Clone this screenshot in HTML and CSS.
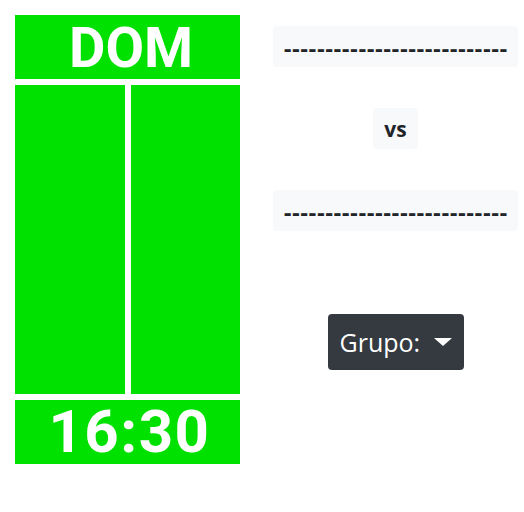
FILE: index.html
```html
<!DOCTYPE html>
<html>
<head>
<meta charset="utf-8">
<link rel="stylesheet" href="styles.css">
</head>
<body>
<div class="page">
  <div class="board">
    <div class="board-head">DOM</div>
    <div class="board-cols">
      <div class="board-col"></div>
      <div class="board-col"></div>
    </div>
    <div class="board-foot">16:30</div>
  </div>
  <div class="match">
    <div class="team">---------------------------</div>
    <div class="vs">vs</div>
    <div class="team">---------------------------</div>
    <button class="group-btn"><span class="group-label">Grupo:</span><span class="caret"></span></button>
  </div>
</div>
</body>
</html>
```
FILE: styles.css
```css
html, body {
  margin: 0;
  padding: 0;
  background: #ffffff;
}
.page {
  display: flex;
  padding: 15px 0 0 15px;
  gap: 33px;
  align-items: flex-start;
}
.board {
  width: 225px;
  display: flex;
  flex-direction: column;
  gap: 6px;
}
.board-head, .board-foot {
  height: 64px;
  background: #00e100;
  color: #ffffff;
  font-family: Roboto, "Open Sans", sans-serif;
  font-weight: 700;
  display: flex;
  align-items: center;
  justify-content: center;
  line-height: 1;
}
.board-head {
  font-size: 56px;
  padding-left: 7px;
  padding-top: 2px;
  box-sizing: border-box;
}
.board-foot {
  font-size: 60px;
  letter-spacing: 1.5px;
  padding-left: 4px;
}
.board-cols {
  height: 309px;
  display: flex;
  gap: 6px;
}
.board-col {
  flex: 1;
  background: #00e100;
}
.match {
  width: 245px;
  display: flex;
  flex-direction: column;
  align-items: center;
  padding-top: 11px;
}
.team, .vs {
  height: 41px;
  background: #f8f9fa;
  border-radius: 4px;
  color: #212529;
  font-weight: 700;
  display: flex;
  align-items: center;
  justify-content: center;
  box-sizing: border-box;
}
.team {
  width: 245px;
  font-family: "DejaVu Sans", sans-serif;
  font-size: 20px;
  padding-top: 4px;
}
.vs {
  width: 45px;
  margin: 41px 0;
  font-family: "Open Sans", sans-serif;
  font-size: 21px;
}
.group-btn {
  margin-top: 83px;
  width: 136px;
  height: 56px;
  background: #343a40;
  border: none;
  border-radius: 4px;
  color: #ffffff;
  font-family: "Open Sans", sans-serif;
  font-size: 25px;
  display: flex;
  align-items: center;
  padding: 0 0 0 12px;
  gap: 14px;
}
.caret {
  width: 0;
  height: 0;
  border-left: 9px solid transparent;
  border-right: 9px solid transparent;
  border-top: 8px solid #ffffff;
}
```
